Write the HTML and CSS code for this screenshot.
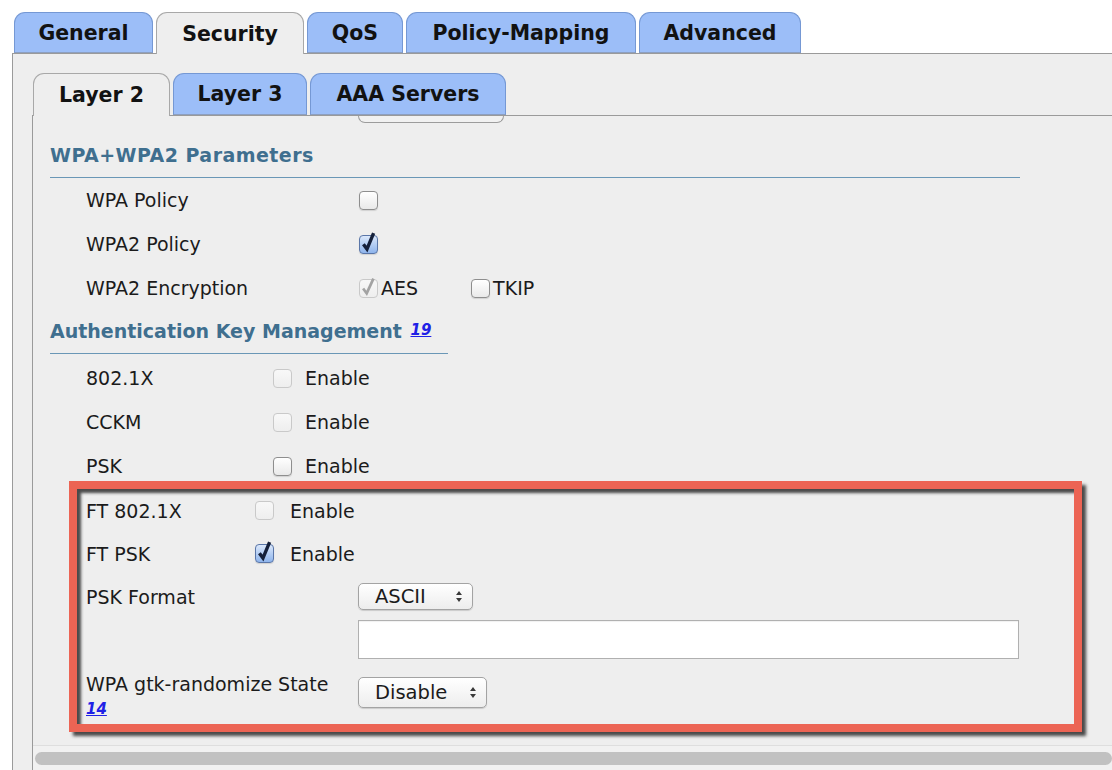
FILE: index.html
```html
<!DOCTYPE html>
<html>
<head>
<meta charset="utf-8">
<title>WLAN Security</title>
<link rel="stylesheet" href="styles.css">
</head>
<body>
<div class="tabbar outer-tabs">
  <div class="tab t-general">General</div>
  <div class="tab active t-security">Security</div>
  <div class="tab t-qos">QoS</div>
  <div class="tab t-policy">Policy-Mapping</div>
  <div class="tab t-advanced">Advanced</div>
  <div class="tab-fill"></div>
</div>
<div class="outer-panel">
  <div class="tabbar inner-tabs">
    <div class="tab active t-l2">Layer 2</div>
    <div class="tab t-l3">Layer 3</div>
    <div class="tab t-aaa">AAA Servers</div>
    <div class="tab-fill"></div>
  </div>
  <div class="inner-panel">
    <div class="content">
      <div class="stub-button"></div>

      <div class="section-head head-wpa">WPA+WPA2 Parameters</div>
      <div class="sec1">
        <div class="row"><div class="label">WPA Policy</div><span class="cb"></span></div>
        <div class="row"><div class="label">WPA2 Policy</div><span class="cb checked"><svg viewBox="0 0 19 19"><path d="M3.8 9.2 L7.8 14.6 L15.2 -3.2"/></svg></span></div>
        <div class="row"><div class="label">WPA2 Encryption</div><span class="cb disabled checked-gray"><svg viewBox="0 0 19 19"><path d="M3.5 9.5 L7.5 15 L15 -1.5"/></svg></span><span class="cb-text tight">AES</span><span class="cb tkip"></span><span class="cb-text tight">TKIP</span></div>
      </div>

      <div class="section-head head-akm">Authentication Key Management <a class="ref sup-ref">19</a></div>
      <div class="sec2">
        <div class="row"><div class="label">802.1X</div><span class="cb disabled"></span><span class="cb-text">Enable</span></div>
        <div class="row"><div class="label">CCKM</div><span class="cb disabled"></span><span class="cb-text">Enable</span></div>
        <div class="row"><div class="label">PSK</div><span class="cb"></span><span class="cb-text">Enable</span></div>
      </div>

      <div class="callout">
        <div class="row"><div class="label w1">FT 802.1X</div><span class="cb disabled"></span><span class="cb-text wide">Enable</span></div>
        <div class="row"><div class="label w1">FT PSK</div><span class="cb checked"><svg viewBox="0 0 19 19"><path d="M3.8 9.2 L7.8 14.6 L15.2 -3.2"/></svg></span><span class="cb-text wide">Enable</span></div>
        <div class="row"><div class="label w2">PSK Format</div>
          <div class="select sel-ascii"><span>ASCII</span><svg class="arrows" viewBox="0 0 8 14"><path d="M4 1 L7.2 5.5 L0.8 5.5 Z M4 13 L7.2 8.5 L0.8 8.5 Z"/></svg></div>
        </div>
        <div class="text-input"></div>
        <div class="row gtk"><div class="label w2 two-line">WPA gtk-randomize State<br><a class="ref">14</a></div>
          <div class="select sel-disable"><span>Disable</span><svg class="arrows" viewBox="0 0 8 14"><path d="M4 1 L7.2 5.5 L0.8 5.5 Z M4 13 L7.2 8.5 L0.8 8.5 Z"/></svg></div>
        </div>
      </div>
    </div>
    <div class="hscroll"><div class="thumb"></div></div>
  </div>
</div>
</body>
</html>
```
FILE: styles.css
```css
* { box-sizing: border-box; }
html, body { margin: 0; padding: 0; overflow: hidden; }
body {
  width: 1112px;
  height: 770px;
  background: #ffffff;
  font-family: "DejaVu Sans", Verdana, sans-serif;
  color: #1b1b1b;
}

/* Tabs */
.tabbar { display: flex; align-items: flex-end; }
.outer-tabs { margin-left: 12px; padding-top: 12px; padding-left: 2px; gap: 3px; }
.inner-tabs { padding-left: 1px; gap: 3px; }
.tab {
  flex: none;
  height: 41px;
  padding: 1px 0 0;
  display: flex;
  align-items: center;
  justify-content: center;
  font-weight: bold;
  font-size: 20.5px;
  color: #121212;
  background: #9cbef8;
  border: 1px solid #7598d4;
  border-bottom-color: #8d9fbf;
  border-radius: 11px 11px 0 0;
  white-space: nowrap;
}
.tab.active {
  background: #eeeeee;
  border-color: #a8a8a8;
  border-bottom: none;
  height: 42px;
  margin-bottom: -1px;
  position: relative;
  z-index: 1;
}
.t-general { width: 139px; }
.t-security { width: 148px; }
.t-qos { width: 96px; }
.t-policy { width: 230px; }
.t-advanced { width: 162px; }
.t-l2 { width: 137px; }
.t-l3 { width: 134px; }
.t-aaa { width: 196px; }
.inner-tabs .tab { height: 42px; padding-top: 0; }
.inner-tabs .tab.active { height: 43px; }
.tab-fill { flex: 1; }

.outer-panel {
  margin-left: 12px;
  border-left: 1px solid #9a9a9a;
  border-top: 1px solid #9a9a9a;
  background: #eeeeee;
  padding: 19px 0 0 19px;
}
.inner-panel {
  border-left: 1px solid #9a9a9a;
  border-top: 1px solid #9a9a9a;
  background: #eeeeee;
}
.content { padding-bottom: 13px; }

.stub-button {
  margin-left: 325px;
  width: 146px;
  height: 7px;
  border: 1px solid #9c9c9c;
  border-top: none;
  border-radius: 0 0 7px 7px;
  background: #f1f1f1;
}

/* Section headings */
.section-head {
  margin-left: 17px;
  height: 44px;
  line-height: 43px;
  font-size: 19px;
  letter-spacing: 0.45px;
  font-weight: bold;
  color: #3f6f8f;
  border-bottom: 1px solid #6a97b6;
  white-space: nowrap;
}
.head-wpa { margin-top: 11px; width: 970px; }
.head-akm { width: 398px; letter-spacing: 0; }
.ref {
  color: #2020e6;
  font-style: italic;
  font-weight: bold;
  font-size: 15px;
  letter-spacing: 0;
  text-decoration: underline;
}
.sup-ref { position: relative; top: -3px; margin-left: 2px; }

/* Rows */
.row {
  display: flex;
  align-items: center;
  height: 44px;
  padding-left: 53px;
  font-size: 19px;
}
.label { flex: none; white-space: nowrap; }
.sec1 .label { width: 273px; }
.sec2 { margin-top: 2px; }
.sec2 .label { width: 187px; }
.cb-text { margin-left: 13px; }
.cb-text.tight { margin-left: 3px; }
.cb-text.wide { margin-left: 16px; }
.cb.tkip { margin-left: 53px; }

/* Checkbox */
.cb {
  flex: none;
  display: inline-block;
  width: 19px;
  height: 19px;
  border: 1px solid #8e8e8e;
  border-radius: 4px;
  background: linear-gradient(#ffffff, #e9e9e9);
  box-shadow: 0 1px 1px rgba(0,0,0,0.12);
}
.cb svg { display: block; width: 17px; height: 17px; overflow: visible; }
.cb svg path { fill: none; stroke-width: 3.8; stroke-linejoin: miter; }
.cb.checked {
  border-color: #5a76a8;
  background: linear-gradient(#dbe8fb, #8eb4ec);
}
.cb.checked svg path { stroke: #15203a; }
.cb.disabled {
  border-color: #c9c9c9;
  background: linear-gradient(#f8f8f8, #eeeeee);
  box-shadow: none;
}
.cb.checked-gray svg path { stroke: #a3a3a3; stroke-width: 3; }

/* Callout box */
.callout {
  margin: -7px 0 0 36px;
  width: 1013px;
  border: 8px solid #ec6454;
  padding-bottom: 3px;
  box-shadow: 4px 4px 3px rgba(45,45,45,0.85), inset 4px 4px 3px rgba(45,45,45,0.85);
}
.callout .row { height: 43px; padding-left: 9px; }
.callout .label.w1 { width: 169px; }
.callout .label.w2 { width: 272px; }
.callout .row.gtk {
  height: auto;
  align-items: flex-start;
  margin-top: 14px;
}
.two-line { line-height: 23px; }

.select {
  display: flex;
  align-items: center;
  justify-content: space-between;
  padding: 0 9px 0 16px;
  border: 1px solid #a3a3a3;
  border-radius: 5px;
  background: linear-gradient(#ffffff, #ededed);
  box-shadow: 0 1px 1px rgba(0,0,0,0.15);
  font-size: 19.5px;
}
.sel-ascii { width: 115px; height: 27px; }
.sel-disable { width: 129px; height: 31px; margin-top: 4px; }
.arrows { width: 8px; height: 13px; }
.arrows path { fill: #3a3a3a; }

.text-input {
  margin: 2px 0 0 281px;
  width: 661px;
  height: 39px;
  border: 1px solid #b0b0b0;
  background: #ffffff;
  box-shadow: inset 0 1px 1px rgba(0,0,0,0.06);
}

/* Horizontal scrollbar */
.hscroll {
  height: 27px;
  border-top: 1px solid #dedede;
  background: #f1f1f1;
  padding: 6px 0 0 2px;
}
.thumb {
  height: 13px;
  border-radius: 7px;
  background: #c1c1c1;
}
```
